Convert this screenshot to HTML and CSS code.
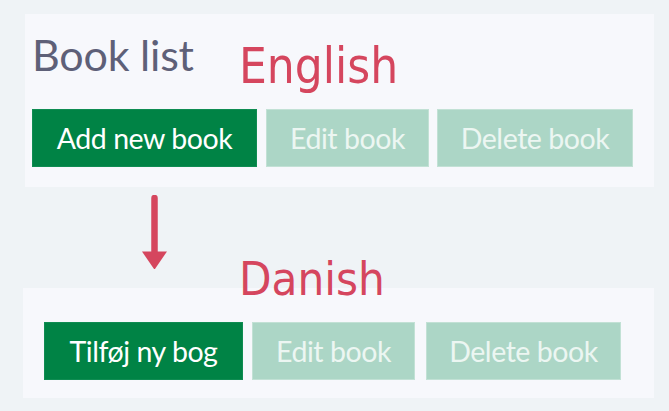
FILE: index.html
```html
<!DOCTYPE html>
<html lang="en">
<head>
<meta charset="utf-8">
<title>Book list</title>
<link rel="stylesheet" href="styles.css">
</head>
<body>
<div class="page">
  <section class="panel panel-en">
    <h1 class="title">Book list</h1>
    <div class="buttons">
      <button class="btn btn-primary w-add">Add new book</button>
      <button class="btn btn-disabled w-edit">Edit book</button>
      <button class="btn btn-disabled w-del">Delete book</button>
    </div>
  </section>

  <section class="panel panel-da">
    <div class="buttons buttons-da">
      <button class="btn btn-primary w-add-da">Tilføj ny bog</button>
      <button class="btn btn-disabled w-edit-da">Edit book</button>
      <button class="btn btn-disabled w-del-da">Delete book</button>
    </div>
  </section>

  <span class="note note-en">English</span>
  <span class="note note-da">Danish</span>
  <svg class="arrow" width="27" height="76" viewBox="0 0 27 76" aria-hidden="true">
    <line x1="13.5" y1="3" x2="13.5" y2="58" stroke="#d5465e" stroke-width="6.5" stroke-linecap="round"/>
    <path d="M1 56.5 L26 56.5 L14.3 73.5 Q13.5 74.6 12.7 73.5 Z" fill="#d5465e"/>
  </svg>
</div>
</body>
</html>
```

FILE: styles.css
```css
html, body {
  margin: 0;
  padding: 0;
  background: #eff3f6;
}

.page {
  position: relative;
  width: 669px;
  height: 411px;
  padding-top: 14px;
  box-sizing: border-box;
  font-family: Lato, "Open Sans", "Liberation Sans", sans-serif;
}

.panel {
  background: #f7f8fc;
  box-sizing: border-box;
}

.panel-en {
  margin-left: 25px;
  width: 629px;
  height: 173px;
  padding: 19px 7px 20px 7px;
}

.panel-da {
  margin-top: 101px;
  margin-left: 23px;
  width: 631px;
  height: 110px;
  padding: 34px 21px 18px 21px;
}

.title {
  margin: 0 0 32px 0;
  font-size: 43px;
  line-height: 44px;
  height: 44px;
  font-weight: 400;
  letter-spacing: -0.2px;
  color: #5e6078;
}

.buttons {
  display: flex;
  gap: 8px;
}

.buttons-da {
  gap: 9px;
}

.btn {
  height: 58px;
  box-sizing: border-box;
  display: flex;
  align-items: center;
  justify-content: center;
  padding: 0;
  margin: 0;
  font-family: Lato, "Open Sans", "Liberation Sans", sans-serif;
  font-size: 28.5px;
  letter-spacing: -0.45px;
  border-radius: 0;
  cursor: default;
}

.btn-primary {
  background: #008345;
  border: 1px solid #0f8c52;
  color: #ffffff;
}

.btn-disabled {
  background: #acd6c6;
  border: 1px solid #c2e1d5;
  color: #ecf6f2;
}

.w-add { width: 225px; margin-right: 1px; }
.w-edit { width: 163px; }
.w-del { width: 196px; }

.w-add-da { width: 199px; }
.w-edit-da { width: 163px; margin-right: 2px; }
.w-del-da { width: 195px; }

.note {
  position: absolute;
  font-family: "DejaVu Sans Condensed", "DejaVu Sans", sans-serif;
  font-stretch: semi-condensed;
  color: #d5465e;
  line-height: 1;
  white-space: nowrap;
}

.note-en {
  left: 239px;
  top: 42px;
  font-size: 49px;
}

.note-da {
  left: 239px;
  top: 255px;
  font-size: 47px;
}

.arrow {
  position: absolute;
  left: 141px;
  top: 195px;
}
```
